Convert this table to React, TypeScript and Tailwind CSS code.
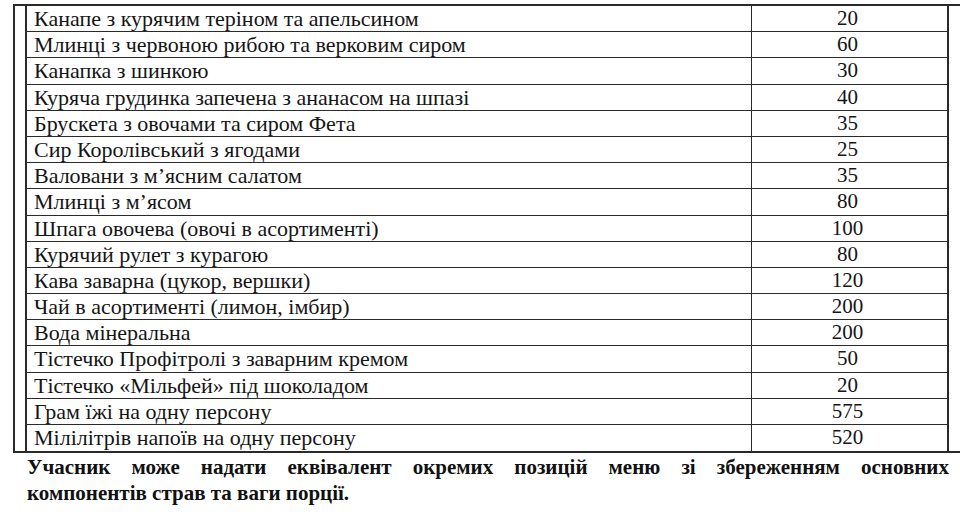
import React from "react";

const rows: [string, string][] = [
  ["Канапе з курячим теріном та апельсином", "20"],
  ["Млинці з червоною рибою та верковим сиром", "60"],
  ["Канапка з шинкою", "30"],
  ["Куряча грудинка запечена з ананасом на шпазі", "40"],
  ["Брускета з овочами та сиром Фета", "35"],
  ["Сир Королівський з ягодами", "25"],
  ["Валовани з м’ясним салатом", "35"],
  ["Млинці з м’ясом", "80"],
  ["Шпага овочева (овочі в асортименті)", "100"],
  ["Курячий рулет з курагою", "80"],
  ["Кава заварна (цукор, вершки)", "120"],
  ["Чай в асортименті (лимон, імбир)", "200"],
  ["Вода мінеральна", "200"],
  ["Тістечко Профітролі з заварним кремом", "50"],
  ["Тістечко «Мільфей» під шоколадом", "20"],
  ["Грам їжі на одну персону", "575"],
  ["Мілілітрів напоїв на одну персону", "520"],
];

const serif = { fontFamily: '"Liberation Serif", Tinos, "Times New Roman", serif' };

export default function App() {
  return (
    <div className="w-[960px] h-[522px] bg-white text-[#151515] overflow-hidden" style={serif}>
      <div className="pt-[4px]">
        <div className="ml-[13px] border-t-2 border-b-2 border-l-2 border-[#2a2a2a] pl-[10px]">
          <div className="w-[924px] border-l-2 border-r-2 border-[#2a2a2a]">
            {rows.map(([name, qty], i) => (
              <div
                key={i}
                className={`flex h-[26.2px] ${i < rows.length - 1 ? "border-b-[1.5px] border-[#2a2a2a]" : ""}`}
              >
                <div
                  className="w-[725px] border-r-[1.5px] border-[#2a2a2a] pl-[7px] text-[22px] leading-[25px] whitespace-nowrap"
                  style={serif}
                >
                  {name}
                </div>
                <div className="flex-1 text-center text-[21px] leading-[25px] pr-[4px]" style={serif}>
                  {qty}
                </div>
              </div>
            ))}
          </div>
        </div>
      </div>
      <div className="pl-[27px] w-[949px] font-bold text-[21px] leading-[26px] text-[#111] mt-[1px]" style={serif}>
        <div className="whitespace-nowrap flex justify-between">
          {"Учасник може надати еквівалент окремих позицій меню зі збереженням основних".split(" ").map((w, i) => (
            <span key={i}>{w}</span>
          ))}
        </div>
        <div>компонентів страв та ваги порції.</div>
      </div>
    </div>
  );
}
